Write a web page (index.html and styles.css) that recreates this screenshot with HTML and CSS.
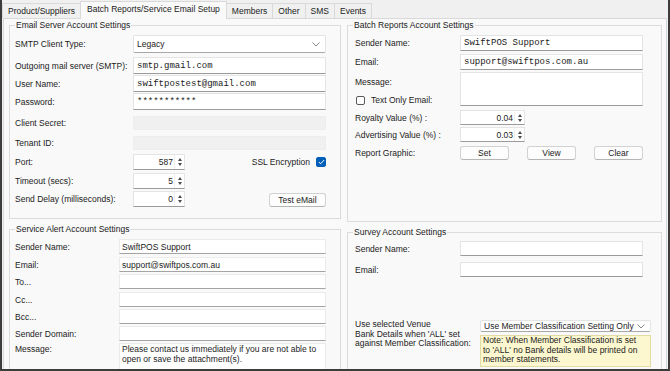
FILE: index.html
```html
<!DOCTYPE html>
<html lang="en">
<head>
    <meta charset="UTF-8">
    <meta name="viewport" content="width=device-width, initial-scale=1.0">
    <title>Batch Reports/Service Email Setup</title>
    <link rel="stylesheet" href="styles.css">
</head>
<body>
<div class="window">
    <div class="tabs">
        <span class="tab">Product/Suppliers</span>
        <span class="tab active">Batch Reports/Service Email Setup</span>
        <span class="tab">Members</span>
        <span class="tab">Other</span>
        <span class="tab">SMS</span>
        <span class="tab">Events</span>
    </div>

    <div class="panel">
        <div class="column">
            <fieldset class="group server">
                <legend>Email Server Account Settings</legend>
                <div class="row h18">
                    <label>SMTP Client Type:</label>
                    <div class="select"><span class="select-text">Legacy</span>
                        <svg class="chevron" width="8" height="5" viewBox="0 0 8 5"><polyline points="0.5,0.5 4,4 7.5,0.5" fill="none" stroke="#8a8a8a" stroke-width="1"/></svg>
                    </div>
                </div>
                <div class="row h17 mt4">
                    <label>Outgoing mail server (SMTP):</label>
                    <div class="input mono">smtp.gmail.com</div>
                </div>
                <div class="row h17 mt1">
                    <label>User Name:</label>
                    <div class="input mono">swiftpostest@gmail.com</div>
                </div>
                <div class="row h17 mt1">
                    <label>Password:</label>
                    <div class="input mono">***********</div>
                </div>
                <div class="row h14 mt6">
                    <label>Client Secret:</label>
                    <div class="input disabled"></div>
                </div>
                <div class="row h14 mt6">
                    <label>Tenant ID:</label>
                    <div class="input disabled"></div>
                </div>
                <div class="row h16 mt4">
                    <label>Port:</label>
                    <div class="spin"><span class="spin-value">587</span><span class="arrows"><i class="up"></i><i class="down"></i></span></div>
                    <span class="ssl">SSL Encryption
                        <span class="checkbox checked"><svg width="7" height="6" viewBox="0 0 7 6"><polyline points="0.8,3 2.6,4.8 6.2,1" fill="none" stroke="#fff" stroke-width="1"/></svg></span>
                    </span>
                </div>
                <div class="row h16 mt3">
                    <label>Timeout (secs):</label>
                    <div class="spin"><span class="spin-value">5</span><span class="arrows"><i class="up"></i><i class="down"></i></span></div>
                </div>
                <div class="row h16 mt2">
                    <label>Send Delay (milliseconds):</label>
                    <div class="spin"><span class="spin-value">0</span><span class="arrows"><i class="up"></i><i class="down"></i></span></div>
                    <button class="btn test">Test eMail</button>
                </div>
            </fieldset>

            <fieldset class="group alert">
                <legend>Service Alert Account Settings</legend>
                <div class="row h15">
                    <label>Sender Name:</label>
                    <div class="input flat">SwiftPOS Support</div>
                </div>
                <div class="row h15 mt3">
                    <label>Email:</label>
                    <div class="input flat">support@swiftpos.com.au</div>
                </div>
                <div class="row h15 mt2">
                    <label>To...</label>
                    <div class="input flat"></div>
                </div>
                <div class="row h15 mt3">
                    <label>Cc...</label>
                    <div class="input flat"></div>
                </div>
                <div class="row h15 mt2">
                    <label>Bcc...</label>
                    <div class="input flat"></div>
                </div>
                <div class="row h15 mt2">
                    <label>Sender Domain:</label>
                    <div class="input flat"></div>
                </div>
                <div class="row top mt2">
                    <label class="msg-label">Message:</label>
                    <div class="input flat area">Please contact us immediately if you are not able to open or save the attachment(s).</div>
                </div>
            </fieldset>
        </div>

        <div class="column">
            <fieldset class="group batch">
                <legend>Batch Reports Account Settings</legend>
                <div class="row h16">
                    <label>Sender Name:</label>
                    <div class="input mono">SwiftPOS Support</div>
                </div>
                <div class="row h16 mt3">
                    <label>Email:</label>
                    <div class="input mono">support@swiftpos.com.au</div>
                </div>
                <div class="row message mt2">
                    <div class="message-labels">
                        <span>Message:</span>
                        <span class="check-line"><span class="checkbox"></span>Text Only Email:</span>
                    </div>
                    <div class="input area"></div>
                </div>
                <div class="row h15 mt4">
                    <label>Royalty Value (%) :</label>
                    <div class="spin wide"><span class="spin-value">0.04</span><span class="arrows"><i class="up"></i><i class="down"></i></span></div>
                </div>
                <div class="row h15 mt2">
                    <label>Advertising Value (%) :</label>
                    <div class="spin wide"><span class="spin-value">0.03</span><span class="arrows"><i class="up"></i><i class="down"></i></span></div>
                </div>
                <div class="row h14 mt4">
                    <label>Report Graphic:</label>
                    <div class="buttons">
                        <button class="btn">Set</button>
                        <button class="btn">View</button>
                        <button class="btn">Clear</button>
                    </div>
                </div>
            </fieldset>

            <fieldset class="group survey">
                <legend>Survey Account Settings</legend>
                <div class="row h15">
                    <label>Sender Name:</label>
                    <div class="input"></div>
                </div>
                <div class="row h15 mt6">
                    <label>Email:</label>
                    <div class="input"></div>
                </div>
                <div class="row top bank">
                    <label class="bank-label">Use selected Venue<br>Bank Details when 'ALL' set<br>against Member Classification:</label>
                    <div class="bank-fields">
                        <div class="select h17"><span class="select-text">Use Member Classification Setting Only</span>
                            <svg class="chevron" width="8" height="5" viewBox="0 0 8 5"><polyline points="0.5,0.5 4,4 7.5,0.5" fill="none" stroke="#8a8a8a" stroke-width="1"/></svg>
                        </div>
                        <div class="note">Note: When Member Classification is set<br>to 'ALL' no Bank details will be printed on<br>member statements.</div>
                    </div>
                </div>
            </fieldset>
        </div>
    </div>
</div>
</body>
</html>
```

FILE: styles.css
```css
* {
    margin: 0;
    padding: 0;
    box-sizing: border-box;
}
html, body {
    width: 670px;
    height: 371px;
    overflow: hidden;
}
body {
    font-family: 'Liberation Sans', Arial, sans-serif;
    font-size: 8.5px;
    color: #1b1b1b;
    background: #f0f0f0;
}
.window {
    width: 670px;
    height: 371px;
    border: 2px solid #3c3c3c;
    border-top: none;
    background: #f0f0f0;
    display: flex;
    flex-direction: column;
    overflow: hidden;
}

/* tab strip */
.tabs {
    display: flex;
    align-items: flex-end;
    height: 18px;
    flex-shrink: 0;
}
.tab {
    height: 15px;
    line-height: 14px;
    padding: 0 5px;
    border: 1px solid #d9d9d9;
    border-bottom: none;
    margin-right: -1px;
    background: #f0f0f0;
    white-space: nowrap;
}
.tab.active {
    height: 18px;
    line-height: 15px;
    margin-bottom: -1px;
    padding: 0 6px;
    background: #f9f9f9;
    position: relative;
    z-index: 1;
}

/* page */
.panel {
    flex: 1;
    margin: 0 1px;
    border: 1px solid #d9d9d9;
    border-bottom: none;
    background: #f9f9f9;
    padding: 0 3px 0 5px;
    display: grid;
    grid-template-columns: 332px 315px;
    column-gap: 6px;
    overflow: hidden;
}
.column {
    display: flex;
    flex-direction: column;
    gap: 4px;
}
.group {
    border: 1px solid #dcdcdc;
    padding: 4px 14px 0 5px;
    min-width: 0;
}
.group legend {
    padding: 0 1px;
    line-height: 12px;
}
.server {
    height: 200px;
}
.batch {
    height: 203px;
    padding-right: 18px;
}
.survey {
    padding-top: 3px;
    padding-right: 18px;
    flex: 1;
}
.alert {
    flex: 1;
}

/* rows */
.row {
    display: flex;
    align-items: center;
}
.row.top {
    align-items: flex-start;
}
.row > label {
    flex-shrink: 0;
    white-space: nowrap;
}
.server .row > label { width: 118px; }
.alert .row > label { width: 104px; }
.batch .row > label,
.survey .row > label { width: 107px; padding-left: 2px; }
.h14 { height: 14px; }
.h15 { height: 15px; }
.h16 { height: 16px; }
.h17 { height: 17px; }
.h18 { height: 18px; }
.mt1 { margin-top: 1px; }
.mt2 { margin-top: 2px; }
.mt3 { margin-top: 3px; }
.mt4 { margin-top: 4px; }
.mt6 { margin-top: 6px; }

/* controls */
.input {
    flex: 1;
    height: 100%;
    background: #fff;
    border: 1px solid #e4e4e4;
    border-bottom-color: #9a9a9a;
    padding: 0 3px;
    display: flex;
    align-items: center;
    white-space: nowrap;
    overflow: hidden;
}
.input.mono {
    font-family: 'Liberation Mono', 'Courier New', monospace;
    font-size: 9px;
}
.input.flat {
    padding: 0 2px;
    border-color: #ebebeb;
    border-bottom-color: #a4a4a4;
}
.input.disabled {
    background: #f0f0f0;
    border-color: #ededed;
}
.input.area {
    height: 34px;
    align-items: flex-start;
    white-space: normal;
}
.alert .input.area {
    height: 30px;
    padding-top: 1px;
    line-height: 9.5px;
    border-bottom: none;
}
.msg-label {
    padding-top: 1px;
}
.select {
    flex: 1;
    height: 100%;
    background: #fff;
    border: 1px solid #e4e4e4;
    border-bottom-color: #a8a8a8;
    border-radius: 2px;
    padding: 0 5px 0 3px;
    display: flex;
    align-items: center;
    overflow: hidden;
}
.select-text {
    flex: 1;
    white-space: nowrap;
    overflow: hidden;
}
.chevron {
    flex-shrink: 0;
    margin-left: 3px;
}
.spin {
    width: 52px;
    height: 100%;
    background: #fff;
    border: 1px solid #e4e4e4;
    border-bottom-color: #9a9a9a;
    display: flex;
    align-items: stretch;
}
.spin.wide {
    width: 65px;
}
.spin-value {
    flex: 1;
    padding-right: 1px;
    display: flex;
    align-items: center;
    justify-content: flex-end;
}
.arrows {
    width: 10px;
    display: flex;
    flex-direction: column;
    justify-content: center;
    align-items: center;
    gap: 2px;
    border-left: 1px solid #efefef;
}
.arrows i {
    width: 0;
    height: 0;
    border-left: 2.5px solid transparent;
    border-right: 2.5px solid transparent;
}
.arrows .up {
    border-bottom: 3px solid #4a4a4a;
}
.arrows .down {
    border-top: 3px solid #4a4a4a;
}
.ssl {
    margin-left: auto;
    display: flex;
    align-items: center;
    gap: 6px;
}
.checkbox {
    width: 9px;
    height: 9px;
    border: 1px solid #5a5a5a;
    border-radius: 2px;
    background: #fff;
    display: inline-flex;
    align-items: center;
    justify-content: center;
}
.checkbox.checked {
    width: 10px;
    height: 10px;
    background: #005fb8;
    border-color: #005fb8;
}
.btn {
    font-family: inherit;
    font-size: inherit;
    color: inherit;
    height: 100%;
    background: #fdfdfd;
    border: 1px solid #d2d2d2;
    border-bottom-color: #b5b5b5;
    border-radius: 3px;
}
.btn.test {
    margin-left: auto;
    width: 57px;
    height: 14px;
    margin-top: 2px;
}
.buttons {
    flex: 1;
    height: 100%;
    display: flex;
    justify-content: space-between;
}
.buttons .btn {
    width: 49px;
}

/* batch message block */
.row.message {
    height: 34px;
    align-items: stretch;
}
.message-labels {
    width: 107px;
    flex-shrink: 0;
    padding: 5px 0 1px 2px;
    line-height: 10px;
    display: flex;
    flex-direction: column;
    justify-content: space-between;
}
.check-line {
    display: flex;
    align-items: center;
    gap: 6px;
    padding-left: 1px;
}

/* bank details */
.bank {
    margin-top: 43px;
}
.survey .row > .bank-label {
    width: 127px;
    line-height: 9.7px;
    white-space: nowrap;
}
.bank-fields {
    flex: 1;
    display: flex;
    flex-direction: column;
    gap: 3px;
}
.note {
    background: #fdf7d0;
    border: 1px solid #e2dba6;
    padding: 0 2px;
    line-height: 9.5px;
    height: 32px;
    white-space: nowrap;
}
```
